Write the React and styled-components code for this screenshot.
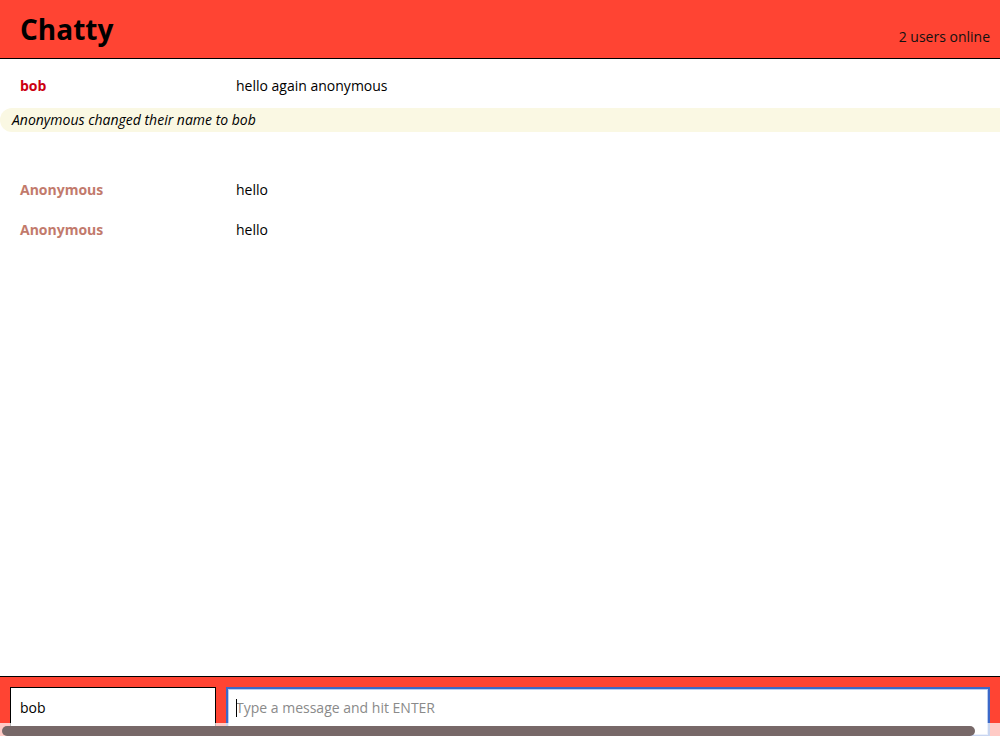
import React from 'react';
import styled, { createGlobalStyle } from 'styled-components';

const GlobalStyle = createGlobalStyle`
  html, body {
    margin: 0;
    padding: 0;
    height: 100%;
    overflow: hidden;
  }
  body {
    font-family: "Open Sans", "DejaVu Sans", sans-serif;
    font-size: 14px;
    color: #000;
    background: #fff;
  }
  #root {
    height: 100%;
  }
`;

const Page = styled.div`
  height: 100vh;
  display: flex;
  flex-direction: column;
`;

const Navbar = styled.nav`
  height: 58px;
  flex-shrink: 0;
  background-color: #ff4433;
  border-bottom: 1px solid #000;
  display: flex;
  align-items: flex-start;
  justify-content: space-between;
  padding: 0 10px 0 20px;
`;

const Brand = styled.h1`
  margin: 0;
  font-size: 28px;
  font-weight: 700;
  line-height: 58px;
`;

const OnlineCount = styled.span`
  margin-top: 27px;
  font-size: 14px;
  line-height: 20px;
  color: #111;
`;

const MessageList = styled.main`
  flex: 1;
  padding-top: 6px;
  overflow: hidden;
`;

const MessageRow = styled.div`
  display: flex;
  align-items: center;
  height: 40px;
  font-size: 14px;
`;

const Username = styled.span`
  flex: 0 0 236px;
  box-sizing: border-box;
  padding-left: 20px;
  font-weight: 700;
  color: ${p => p.color};
`;

const Content = styled.span`
  flex: 1;
`;

const SystemMessage = styled.div`
  margin-top: 3px;
  height: 24px;
  line-height: 24px;
  padding-left: 12px;
  background-color: #faf8e3;
  border-radius: 12px 0 0 12px;
  font-style: italic;
  font-size: 14px;
`;

const Spacer = styled.div`
  height: ${p => p.size}px;
`;

const ChatBar = styled.footer`
  flex-shrink: 0;
  height: 60px;
  background-color: #ff4433;
  border-top: 1px solid #000;
  display: flex;
  gap: 10px;
  padding: 10px 10px 0 10px;
  box-sizing: border-box;
  overflow: hidden;
`;

const NameInput = styled.input`
  flex: 0 0 206px;
  height: 50px;
  box-sizing: border-box;
  border: 1px solid #000;
  padding: 0 9px 10px;
  font-family: inherit;
  font-size: 14px;
  color: #000;
  outline: none;
`;

const MessageInput = styled.input`
  flex: 1;
  min-width: 0;
  height: 50px;
  box-sizing: border-box;
  border: 2px solid #3c68c8;
  box-shadow: inset 0 0 0 1px #b9cdf0;
  padding: 0 8px 10px;
  font-family: inherit;
  font-size: 14px;
  outline: none;
  caret-color: #000;
  &::placeholder {
    color: #8a8a8a;
  }
`;

const Caret = styled.span`
  position: absolute;
  left: 236px;
  bottom: 19px;
  width: 1px;
  height: 18px;
  background: #000;
`;

const ScrollTrack = styled.div`
  position: fixed;
  left: 0;
  right: 0;
  bottom: 0;
  height: 13px;
  background: rgba(255, 255, 255, 0.72);
`;

const ScrollThumb = styled.div`
  position: absolute;
  left: 2px;
  top: 3px;
  width: 973px;
  height: 10px;
  border-radius: 5px;
  background: #776868;
`;

const messages = [
  { type: 'chat', user: 'bob', color: '#cc0011', text: 'hello again anonymous' },
  { type: 'system', text: 'Anonymous changed their name to bob' },
  { type: 'gap' },
  { type: 'chat', user: 'Anonymous', color: '#c27a6c', text: 'hello' },
  { type: 'chat', user: 'Anonymous', color: '#c27a6c', text: 'hello' },
];

const App = () => {
  return (
    <>
      <GlobalStyle />
      <Page>
        <Navbar>
          <Brand>Chatty</Brand>
          <OnlineCount>2 users online</OnlineCount>
        </Navbar>
        <MessageList>
          {messages.map((m, i) => {
            if (m.type === 'system') return <SystemMessage key={i}>{m.text}</SystemMessage>;
            if (m.type === 'gap') return <Spacer key={i} size={37} />;
            return (
              <MessageRow key={i}>
                <Username color={m.color}>{m.user}</Username>
                <Content>{m.text}</Content>
              </MessageRow>
            );
          })}
        </MessageList>
        <ChatBar>
          <NameInput defaultValue="bob" />
          <MessageInput placeholder="Type a message and hit ENTER" />
        </ChatBar>
        <Caret />
      </Page>
      <ScrollTrack>
        <ScrollThumb />
      </ScrollTrack>
    </>
  );
};

export default App;
